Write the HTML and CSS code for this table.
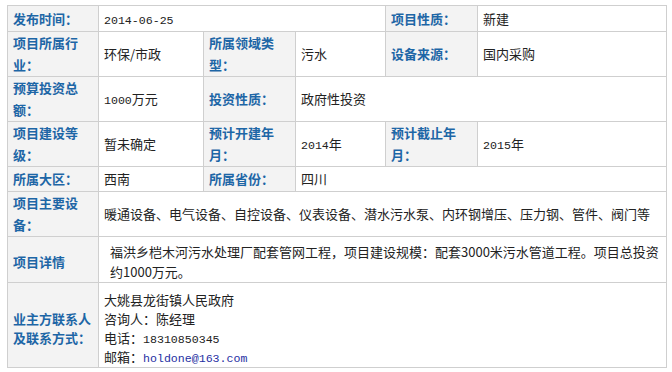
FILE: index.html
```html
<!DOCTYPE html>
<html lang="zh-CN">
<head>
<meta charset="utf-8">
<title>项目信息</title>
<link rel="stylesheet" href="styles.css">
</head>
<body>
<div class="wrap">
<table class="info">
  <colgroup>
    <col class="c1"><col class="c2"><col class="c3"><col class="c4"><col class="c5"><col class="c6">
  </colgroup>
  <tbody>
    <tr class="r26">
      <th>发布时间：</th>
      <td colspan="3"><span class="en">2014-06-25</span></td>
      <th>项目性质：</th>
      <td>新建</td>
    </tr>
    <tr class="r45">
      <th>项目所属行业：</th>
      <td>环保/市政</td>
      <th>所属领域类型：</th>
      <td>污水</td>
      <th>设备来源：</th>
      <td>国内采购</td>
    </tr>
    <tr class="r45">
      <th>预算投资总额：</th>
      <td><span class="en">1000</span>万元</td>
      <th>投资性质：</th>
      <td colspan="3">政府性投资</td>
    </tr>
    <tr class="r45">
      <th>项目建设等级：</th>
      <td>暂未确定</td>
      <th>预计开建年月：</th>
      <td><span class="en">2014</span>年</td>
      <th>预计截止年月：</th>
      <td><span class="en">2015</span>年</td>
    </tr>
    <tr class="r25">
      <th>所属大区：</th>
      <td>西南</td>
      <th>所属省份：</th>
      <td colspan="3">四川</td>
    </tr>
    <tr class="r45">
      <th>项目主要设备：</th>
      <td colspan="5">暖通设备、电气设备、自控设备、仪表设备、潜水污水泵、内环钢增压、压力钢、管件、阀门等</td>
    </tr>
    <tr class="r46 shift">
      <th>项目详情</th>
      <td colspan="5" class="detail">福洪乡桤木河污水处理厂配套管网工程，项目建设规模：配套3000米污水管道工程。项目总投资约1000万元。</td>
    </tr>
    <tr class="r85 shift">
      <th class="tight">业主方联系人及联系方式：</th>
      <td colspan="5" class="contact">
        <div>大姚县龙街镇人民政府</div>
        <div>咨询人：陈经理</div>
        <div>电话：<span class="en">18310850345</span></div>
        <div>邮箱：<a class="mail en" href="mailto:holdone@163.com">holdone@163.com</a></div>
      </td>
    </tr>
  </tbody>
</table>
</div>
</body>
</html>
```

FILE: styles.css
```css
html, body {
  margin: 0;
  padding: 0;
  background: #ffffff;
}

.wrap {
  padding: 5px 0 0 7px;
}

.info {
  border-collapse: collapse;
  table-layout: fixed;
  width: 659px;
  font-family: "Noto Sans CJK SC", "Noto Sans", sans-serif;
  font-size: 13px;
  color: #222222;
}

.c1 { width: 91px; }
.c2 { width: 105px; }
.c3 { width: 92px; }
.c4 { width: 90px; }
.c5 { width: 92px; }
.c6 { width: 189px; }

.info th,
.info td {
  border: 1px solid #cfcfcf;
  padding: 0 4px 0 5px;
  vertical-align: middle;
  text-align: left;
  line-height: 22px;
}

.info th {
  background: #f3f3f3;
  color: #1d66a6;
  font-weight: bold;
}

.info td {
  background: #ffffff;
  font-weight: normal;
}

.r26 { height: 26px; }
.r25 { height: 25px; }
.r45 { height: 45px; }
.r46 { height: 46px; }
.r85 { height: 85px; }

.info .shift th,
.info .shift td {
  padding-top: 5px;
}

.info .tight {
  line-height: 19px;
}

.info .detail {
  line-height: 20px;
  padding-left: 11px;
  padding-right: 2px;
}

.info .contact {
  line-height: 19px;
  padding-top: 6px;
}

.en {
  font-family: "Liberation Mono", "DejaVu Sans Mono", monospace;
  font-size: 11.6px;
  line-height: 1;
}

.mail {
  color: #1f2fa3;
  text-decoration: none;
}
```
